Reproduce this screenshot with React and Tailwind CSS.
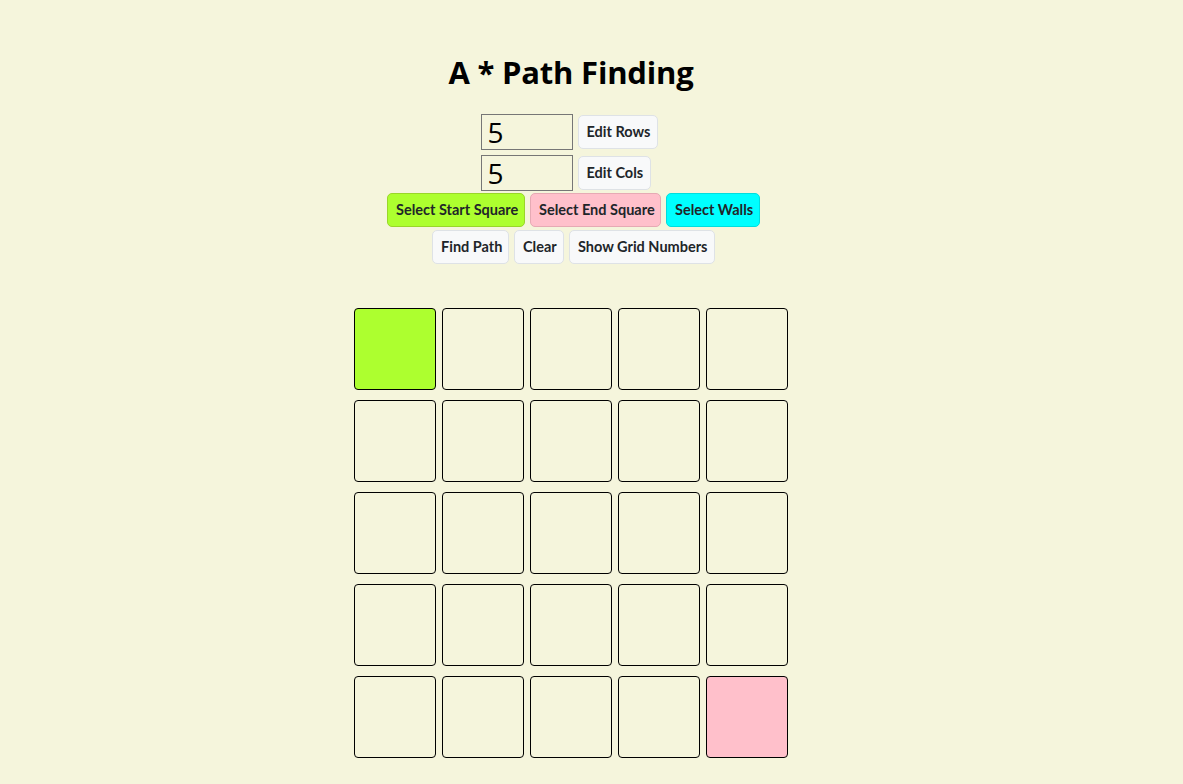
import React, { useState } from 'react';

const btn = "h-[34px] px-[8px] rounded-[5px] border whitespace-nowrap text-[14.5px] font-['Lato',sans-serif] font-bold text-[#212529] leading-none";
const lightBtn = `${btn} bg-[#f8f9fa] border-[#dee2e6]`;

const Cell = ({ kind }) => {
    const bg = kind === 'start' ? 'bg-[#adff2f]' : kind === 'end' ? 'bg-[#ffc0cb]' : 'bg-transparent';
    return <div className={`w-[82px] h-[82px] border border-black rounded-[4px] ${bg}`} />;
};

export default function App() {
    const [rows, setRows] = useState('5');
    const [cols, setCols] = useState('5');
    const n = 5;

    return (
        <div className="min-h-screen bg-[#f5f5dc] font-['Open_Sans',sans-serif]">
            <div className="w-[1142px] flex flex-col items-center pt-[52px]">
                <h1 className="text-[31px] font-bold leading-[40px] text-black tracking-[-0.2px]">A * Path Finding</h1>

                <div className="mt-[22px] flex flex-col items-center gap-[5px] ml-[-4px]">
                    <div className="flex items-end gap-[5px] w-[177px]">
                        <input
                            value={rows}
                            onChange={(e) => setRows(e.target.value)}
                            className="w-[92px] h-[36px] border border-[#767676] bg-transparent px-[6px] text-[28px] text-black outline-none"
                        />
                        <button className={`${lightBtn} w-[80px] mb-[1px]`}>Edit Rows</button>
                    </div>
                    <div className="flex items-end gap-[5px] w-[177px]">
                        <input
                            value={cols}
                            onChange={(e) => setCols(e.target.value)}
                            className="w-[92px] h-[36px] border border-[#767676] bg-transparent px-[6px] text-[28px] text-black outline-none"
                        />
                        <button className={`${lightBtn} w-[73px] mb-[1px]`}>Edit Cols</button>
                    </div>
                </div>

                <div className="mt-[2px] flex gap-[5px] ml-[5px]">
                    <button className={`${btn} w-[138px] bg-[#adff2f] border-[#9ad62a]`}>Select Start Square</button>
                    <button className={`${btn} w-[131px] bg-[#ffc0cb] border-[#e6aab4]`}>Select End Square</button>
                    <button className={`${btn} w-[94px] bg-[#00ffff] border-[#00dede]`}>Select Walls</button>
                </div>

                <div className="mt-[3px] flex gap-[5px] ml-[5px]">
                    <button className={`${lightBtn} w-[77px]`}>Find Path</button>
                    <button className={`${lightBtn} w-[50px]`}>Clear</button>
                    <button className={`${lightBtn} w-[146px]`}>Show Grid Numbers</button>
                </div>

                <div className="mt-[44px] grid grid-cols-5 gap-x-[6px] gap-y-[10px]">
                    {Array.from({ length: n * n }).map((_, i) => (
                        <Cell key={i} kind={i === 0 ? 'start' : i === n * n - 1 ? 'end' : ''} />
                    ))}
                </div>
            </div>
        </div>
    );
}
